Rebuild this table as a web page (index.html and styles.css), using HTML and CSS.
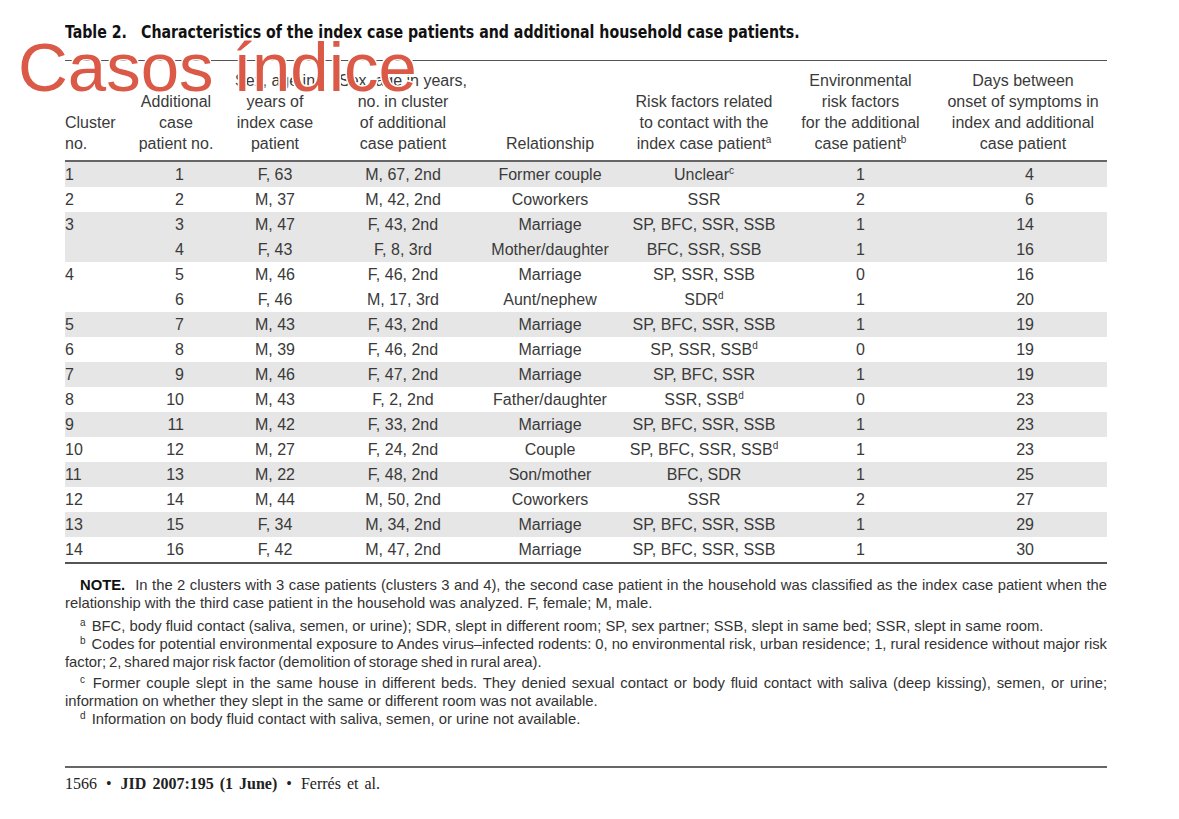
FILE: index.html
```html
<!DOCTYPE html>
<html lang="en">
<head>
    <meta charset="UTF-8">
    <title>Table 2 - Casos índice</title>
    <link rel="stylesheet" href="styles.css">
</head>
<body>
    <div class="page">
        <h1 class="titulo"><span class="titulo-texto"><span class="num">Table 2.</span>Characteristics of the index case patients and additional household case patients.</span></h1>

        <table class="tabela">
            <colgroup>
                <col class="c1"><col class="c2"><col class="c3"><col class="c4">
                <col class="c5"><col class="c6"><col class="c7"><col class="c8">
            </colgroup>
            <thead>
                <tr>
                    <th class="esq">Cluster<br>no.</th>
                    <th>Additional<br>case<br>patient no.</th>
                    <th>Sex, age in<br>years of<br>index case<br>patient</th>
                    <th>Sex, age in years,<br>no. in cluster<br>of additional<br>case patient</th>
                    <th>Relationship</th>
                    <th>Risk factors related<br>to contact with the<br>index case patient<sup>a</sup></th>
                    <th>Environmental<br>risk factors<br>for the additional<br>case patient<sup>b</sup></th>
                    <th>Days between<br>onset of symptoms in<br>index and additional<br>case patient</th>
                </tr>
            </thead>
            <tbody>
                <tr class="cinza"><td class="esq">1</td><td class="dir2">1</td><td>F, 63</td><td>M, 67, 2nd</td><td>Former couple</td><td>Unclear<sup>c</sup></td><td>1</td><td class="dias">4</td></tr>
                <tr><td class="esq">2</td><td class="dir2">2</td><td>M, 37</td><td>M, 42, 2nd</td><td>Coworkers</td><td>SSR</td><td>2</td><td class="dias">6</td></tr>
                <tr class="cinza"><td class="esq">3</td><td class="dir2">3</td><td>M, 47</td><td>F, 43, 2nd</td><td>Marriage</td><td>SP, BFC, SSR, SSB</td><td>1</td><td class="dias">14</td></tr>
                <tr class="cinza"><td class="esq"></td><td class="dir2">4</td><td>F, 43</td><td>F, 8, 3rd</td><td>Mother/daughter</td><td>BFC, SSR, SSB</td><td>1</td><td class="dias">16</td></tr>
                <tr><td class="esq">4</td><td class="dir2">5</td><td>M, 46</td><td>F, 46, 2nd</td><td>Marriage</td><td>SP, SSR, SSB</td><td>0</td><td class="dias">16</td></tr>
                <tr><td class="esq"></td><td class="dir2">6</td><td>F, 46</td><td>M, 17, 3rd</td><td>Aunt/nephew</td><td>SDR<sup>d</sup></td><td>1</td><td class="dias">20</td></tr>
                <tr class="cinza"><td class="esq">5</td><td class="dir2">7</td><td>M, 43</td><td>F, 43, 2nd</td><td>Marriage</td><td>SP, BFC, SSR, SSB</td><td>1</td><td class="dias">19</td></tr>
                <tr><td class="esq">6</td><td class="dir2">8</td><td>M, 39</td><td>F, 46, 2nd</td><td>Marriage</td><td>SP, SSR, SSB<sup>d</sup></td><td>0</td><td class="dias">19</td></tr>
                <tr class="cinza"><td class="esq">7</td><td class="dir2">9</td><td>M, 46</td><td>F, 47, 2nd</td><td>Marriage</td><td>SP, BFC, SSR</td><td>1</td><td class="dias">19</td></tr>
                <tr><td class="esq">8</td><td class="dir2">10</td><td>M, 43</td><td>F, 2, 2nd</td><td>Father/daughter</td><td>SSR, SSB<sup>d</sup></td><td>0</td><td class="dias">23</td></tr>
                <tr class="cinza"><td class="esq">9</td><td class="dir2">11</td><td>M, 42</td><td>F, 33, 2nd</td><td>Marriage</td><td>SP, BFC, SSR, SSB</td><td>1</td><td class="dias">23</td></tr>
                <tr><td class="esq">10</td><td class="dir2">12</td><td>M, 27</td><td>F, 24, 2nd</td><td>Couple</td><td>SP, BFC, SSR, SSB<sup>d</sup></td><td>1</td><td class="dias">23</td></tr>
                <tr class="cinza"><td class="esq">11</td><td class="dir2">13</td><td>M, 22</td><td>F, 48, 2nd</td><td>Son/mother</td><td>BFC, SDR</td><td>1</td><td class="dias">25</td></tr>
                <tr><td class="esq">12</td><td class="dir2">14</td><td>M, 44</td><td>M, 50, 2nd</td><td>Coworkers</td><td>SSR</td><td>2</td><td class="dias">27</td></tr>
                <tr class="cinza"><td class="esq">13</td><td class="dir2">15</td><td>F, 34</td><td>M, 34, 2nd</td><td>Marriage</td><td>SP, BFC, SSR, SSB</td><td>1</td><td class="dias">29</td></tr>
                <tr><td class="esq">14</td><td class="dir2">16</td><td>F, 42</td><td>M, 47, 2nd</td><td>Marriage</td><td>SP, BFC, SSR, SSB</td><td>1</td><td class="dias">30</td></tr>
            </tbody>
        </table>

        <div class="notas">
            <p class="nota-principal"><strong>NOTE.</strong>In the 2 clusters with 3 case patients (clusters 3 and 4), the second case patient in the household was classified as the index case patient when the relationship with the third case patient in the household was analyzed. F, female; M, male.</p>
            <p><sup>a</sup> BFC, body fluid contact (saliva, semen, or urine); SDR, slept in different room; SP, sex partner; SSB, slept in same bed; SSR, slept in same room.</p>
            <p class="nota-b"><sup>b</sup> Codes for potential environmental exposure to Andes virus&ndash;infected rodents: 0, no environmental risk, urban residence; 1, rural residence without major risk factor; 2, shared major risk factor (demolition of storage shed in rural area).</p>
            <p><sup>c</sup> Former couple slept in the same house in different beds. They denied sexual contact or body fluid contact with saliva (deep kissing), semen, or urine; information on whether they slept in the same or different room was not available.</p>
            <p><sup>d</sup> Information on body fluid contact with saliva, semen, or urine not available.</p>
        </div>

        <div class="rodape">
            1566 <span class="ponto">&bull;</span> <strong>JID 2007:195 (1 June)</strong> <span class="ponto">&bull;</span> Ferrés et al.
        </div>
    </div>

    <div class="carimbo">Casos índice</div>
</body>
</html>
```

FILE: styles.css
```css
body {
    margin: 0;
    background-color: white;
    color: #3a3a3a;
    font-family: "Liberation Sans", Arial, sans-serif;
    position: relative;
}

.page {
    padding: 21px 72px 0 65px;
}

.titulo {
    margin: 0 0 17px;
    font-family: "DejaVu Sans Condensed", "Liberation Sans", sans-serif;
    font-size: 18px;
    line-height: 22px;
    font-weight: bold;
    color: #111;
    white-space: nowrap;
}
.titulo-texto {
    display: inline-block;
    transform: scaleX(0.875);
    transform-origin: left center;
}
.titulo .num {
    margin-right: 16px;
}

.tabela {
    width: 1042px;
    border-collapse: collapse;
    table-layout: fixed;
    border-top: 1.5px solid #555;
    border-bottom: 2px solid #555;
    font-size: 16px;
}
        .c1 { width: 69px; }
        .c2 { width: 84px; }
        .c3 { width: 114px; }
        .c4 { width: 142px; }
        .c5 { width: 152px; }
        .c6 { width: 156px; }
        .c7 { width: 157px; }
        .c8 { width: 168px; }

        .tabela th {
            font-weight: normal;
            line-height: 21px;
            padding: 9px 0 6px;
            vertical-align: bottom;
            text-align: center;
            white-space: nowrap;
            border-bottom: 2px solid #666;
        }
        .tabela td {
            height: 25px;
            padding: 0;
            line-height: 25px;
            text-align: center;
            white-space: nowrap;
        }
        .tabela .esq {
            text-align: left;
        }
        .tabela .dir2 {
            text-align: right;
            padding-right: 34px;
        }
        .tabela .dias {
            text-align: right;
            padding-right: 73px;
        }
        .tabela tr.cinza td {
            background-color: #e6e6e6;
        }
        .tabela sup {
            font-size: 10px;
            line-height: 0;
            vertical-align: 6px;
        }

.notas {
    margin-top: 12px;
    font-size: 14.8px;
    line-height: 18px;
    color: #333;
}
.notas p {
    margin: 0;
    text-indent: 15px;
    text-align: justify;
}
.notas strong {
    color: #111;
    margin-right: 10px;
}
.notas sup {
    font-size: 10px;
    line-height: 0;
    vertical-align: 5px;
    margin-right: 2px;
}
.notas .nota-principal {
    margin-bottom: 5px;
}
.notas .nota-b {
    margin-bottom: 3px;
    word-spacing: -1.2px;
}

.rodape {
    margin-top: 38px;
    border-top: 2px solid #666;
    padding-top: 7px;
    font-family: "Liberation Serif", "Times New Roman", serif;
    font-size: 16px;
    line-height: 18px;
    color: #222;
    word-spacing: 2px;
}
.rodape .ponto {
    margin: 0 3px;
}

.carimbo {
    position: absolute;
    left: 18px;
    top: 33px;
    font-family: "Liberation Sans", Arial, sans-serif;
    font-size: 69px;
    line-height: 69px;
    color: #db5a47;
    -webkit-text-stroke: 3px white;
    paint-order: stroke fill;
}
```
